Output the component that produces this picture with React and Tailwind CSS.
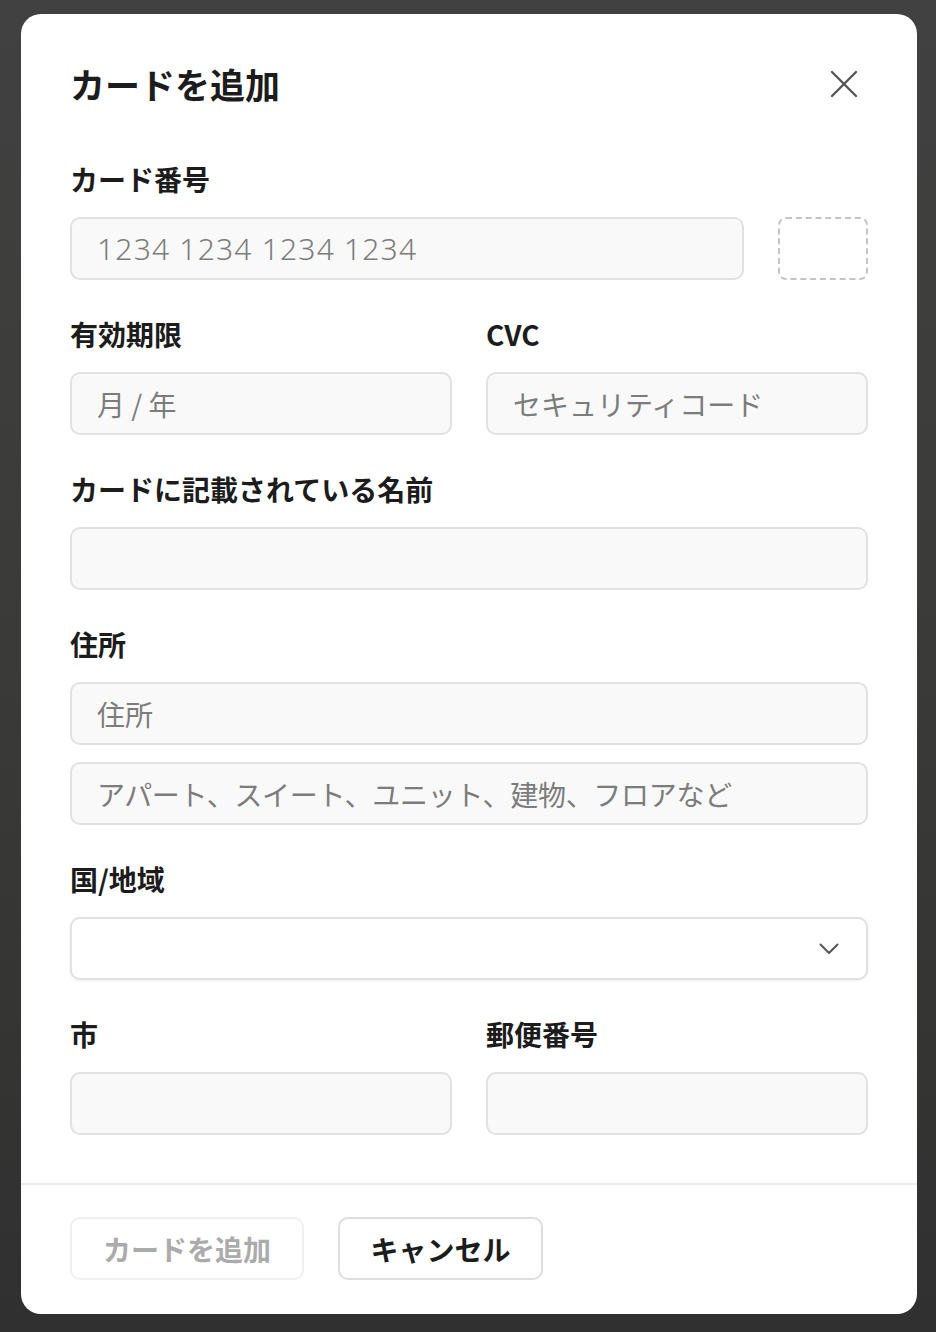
function Label({ children }) {
  return <div className="text-[28px] leading-[28px] font-bold text-[#1c1c1c] mb-6">{children}</div>;
}

function Field({ placeholder = '', extra = '' }) {
  return (
    <input
      type="text"
      placeholder={placeholder}
      className={`block w-full h-[63px] rounded-[10px] border-2 border-[#e1e1e1] bg-[#f9f9f9] px-[25px] text-[28px] text-[#222] placeholder:text-[#7c7c7c] outline-none ${extra}`}
    />
  );
}

export default function App() {
  return (
    <div className="min-h-[1332px] w-full bg-gradient-to-b from-[#414141] via-[#3a3a38] to-[#303030] pt-[14px] pl-[21px] font-['Noto_Sans_CJK_JP','Noto_Sans',sans-serif]">
      <div className="w-[896px] h-[1300px] bg-white rounded-[20px] flex flex-col overflow-hidden">
        <div className="px-[49px] pt-[50px] pb-[48px]">
          {/* Header */}
          <div className="flex items-center justify-between h-10">
            <h2 className="text-[35px] leading-10 font-bold text-[#1c1c1c]">カードを追加</h2>
            <button className="mr-[10px]">
              <svg width="28" height="28" viewBox="0 0 28 28" fill="none" stroke="#555" strokeWidth="2.4" strokeLinecap="round">
                <path d="M2 2 L26 26 M26 2 L2 26" />
              </svg>
            </button>
          </div>

          {/* Card number */}
          <div className="mt-[61px]">
            <Label>カード番号</Label>
            <div className="flex gap-[34px]">
              <Field placeholder="1234 1234 1234 1234" extra="font-['Noto_Sans',sans-serif] text-[30px] tracking-[1.2px] font-light" />
              <div className="w-[90px] h-[63px] shrink-0 rounded-[8px] border-2 border-dashed border-[#c4c4c4]"></div>
            </div>
          </div>

          {/* Expiry + CVC */}
          <div className="mt-10 grid grid-cols-2 gap-x-[34px]">
            <div>
              <Label>有効期限</Label>
              <Field placeholder="月 / 年" />
            </div>
            <div>
              <Label>CVC</Label>
              <Field placeholder="セキュリティコード" />
            </div>
          </div>

          {/* Name */}
          <div className="mt-10">
            <Label>カードに記載されている名前</Label>
            <Field />
          </div>

          {/* Address */}
          <div className="mt-10">
            <Label>住所</Label>
            <div className="flex flex-col gap-[17px]">
              <Field placeholder="住所" />
              <Field placeholder="アパート、スイート、ユニット、建物、フロアなど" extra="tracking-[-0.3px]" />
            </div>
          </div>

          {/* Country */}
          <div className="mt-10">
            <Label>国/地域</Label>
            <div className="relative h-[63px] rounded-[10px] border-2 border-[#e1e1e1] bg-white shadow-[0_1px_3px_rgba(0,0,0,0.07)]">
              <svg className="absolute right-[27px] top-[24px]" width="20" height="12" viewBox="0 0 20 12" fill="none" stroke="#555" strokeWidth="2" strokeLinecap="round" strokeLinejoin="round">
                <path d="M1.5 1.5 L10 10 L18.5 1.5" />
              </svg>
            </div>
          </div>

          {/* City + Postal */}
          <div className="mt-10 grid grid-cols-2 gap-x-[34px]">
            <div>
              <Label>市</Label>
              <Field />
            </div>
            <div>
              <Label>郵便番号</Label>
              <Field />
            </div>
          </div>
        </div>

        {/* Footer */}
        <div className="border-t-2 border-[#ebebeb] px-[49px] pt-8 flex gap-[34px]">
          <button className="h-[63px] w-[234px] rounded-[10px] border-2 border-[#f0f0f0] text-[28px] font-bold text-[#ababab]">
            カードを追加
          </button>
          <button className="h-[63px] w-[205px] rounded-[10px] border-2 border-[#dedede] text-[28px] font-bold text-[#1c1c1c]">
            キャンセル
          </button>
        </div>
      </div>
    </div>
  );
}
